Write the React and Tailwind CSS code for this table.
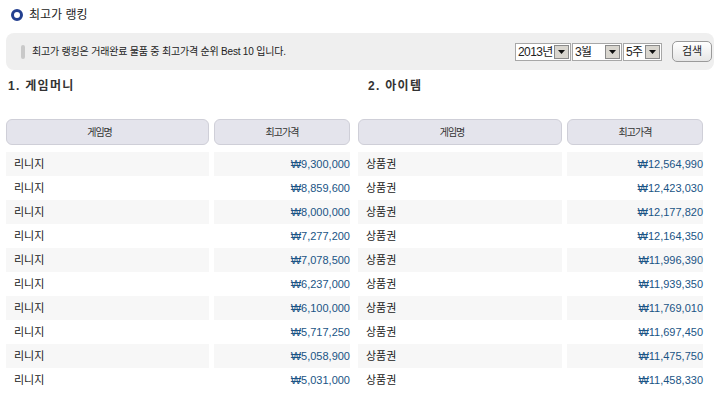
const moneyRows = [
  '₩9,300,000',
  '₩8,859,600',
  '₩8,000,000',
  '₩7,277,200',
  '₩7,078,500',
  '₩6,237,000',
  '₩6,100,000',
  '₩5,717,250',
  '₩5,058,900',
  '₩5,031,000',
];

const itemRows = [
  '₩12,564,990',
  '₩12,423,030',
  '₩12,177,820',
  '₩12,164,350',
  '₩11,996,390',
  '₩11,939,350',
  '₩11,769,010',
  '₩11,697,450',
  '₩11,475,750',
  '₩11,458,330',
];

function SelectBox({ label, width }) {
  return (
    <div className="flex items-center h-[18px] border border-[#a7a7a7] bg-white">
      <div className={`${width} whitespace-nowrap overflow-hidden text-[12px] leading-none text-[#222] pl-[2px] tracking-[-0.6px]`}>{label}</div>
      <div className="w-[15px] h-[14px] mr-[1px] bg-[#d9d6cf] border border-[#8a8a8a] flex items-center justify-center">
        <svg width="7" height="4" viewBox="0 0 7 4">
          <polygon points="0,0 7,0 3.5,4" fill="#111" />
        </svg>
      </div>
    </div>
  );
}

function RankTable({ title, name, prices, headingPad, firstCol }) {
  return (
    <div>
      <div className={`${headingPad} h-[14px] text-[12px] leading-[14px] font-bold text-[#333] tracking-[1.3px]`}>{title}</div>
      <div className={`grid ${firstCol} gap-x-[5px] mt-[26px]`}>
        <div className="h-[26px] rounded-[6px] border border-[#cfcfd8] bg-[#e4e4ec] flex items-center justify-center pr-4 text-[10px] tracking-[-1px] text-[#333]">
          게임명
        </div>
        <div className="h-[26px] rounded-[6px] border border-[#cfcfd8] bg-[#e4e4ec] flex items-center justify-center text-[10px] tracking-[-1px] text-[#333]">
          최고가격
        </div>
      </div>
      <div className="mt-[7px]">
        {prices.map((p, i) => (
          <div key={i} className={`grid ${firstCol} gap-x-[5px] h-[24px]`}>
            <div className={`flex items-center pl-2 text-[11px] text-[#222] ${i % 2 === 0 ? 'bg-[#f7f7f7]' : ''}`}>{name}</div>
            <div className={`flex items-center justify-end text-[11px] text-[#1a5485] ${i % 2 === 0 ? 'bg-[#f7f7f7]' : ''}`}>{p}</div>
          </div>
        ))}
      </div>
    </div>
  );
}

export default function App() {
  return (
    <div className="w-[720px] h-[397px] bg-white overflow-hidden font-['Liberation_Sans','Noto_Sans_CJK_KR',sans-serif]">
      {/* title */}
      <div className="flex items-center h-[30px] pl-[11px] gap-[6px]">
        <div className="w-[12px] h-[12px] rounded-full border-[3px] border-[#233f8f]"></div>
        <span className="text-[12px] text-[#222]">최고가 랭킹</span>
      </div>

      {/* info bar */}
      <div className="mx-[6px] mt-[3px] h-[37px] rounded-[8px] bg-[#efefef] flex items-center justify-between pl-[15px] pr-[2px]">
        <div className="flex items-center">
          <div className="w-[4px] h-[14px] rounded-full bg-[#c9c9c9] mr-[7px]"></div>
          <span className="text-[10px] tracking-[-0.2px] text-[#222]">최고가 랭킹은 거래완료 물품 중 최고가격 순위 Best 10 입니다.</span>
        </div>
        <div className="flex items-center">
          <div className="flex items-center gap-[1px]">
            <SelectBox label="2013년" width="w-[38px]" />
            <SelectBox label="3월" width="w-[32px]" />
            <SelectBox label="5주" width="w-[21px]" />
          </div>
          <button className="ml-[10px] w-[40px] h-[21px] rounded-[5px] border border-[#9a9a9a] bg-gradient-to-b from-white to-[#e6e6e6] text-[11px] text-[#222] flex items-center justify-center">
            검색
          </button>
        </div>
      </div>

      {/* tables */}
      <div className="flex px-[6px] gap-[8px] mt-[9px]">
        <RankTable title="1. 게임머니" name="리니지" prices={moneyRows} headingPad="pl-[2px]" firstCol="grid-cols-[203px_136px]" />
        <RankTable title="2. 아이템" name="상품권" prices={itemRows} headingPad="pl-[10px]" firstCol="grid-cols-[204px_136px]" />
      </div>
    </div>
  );
}
